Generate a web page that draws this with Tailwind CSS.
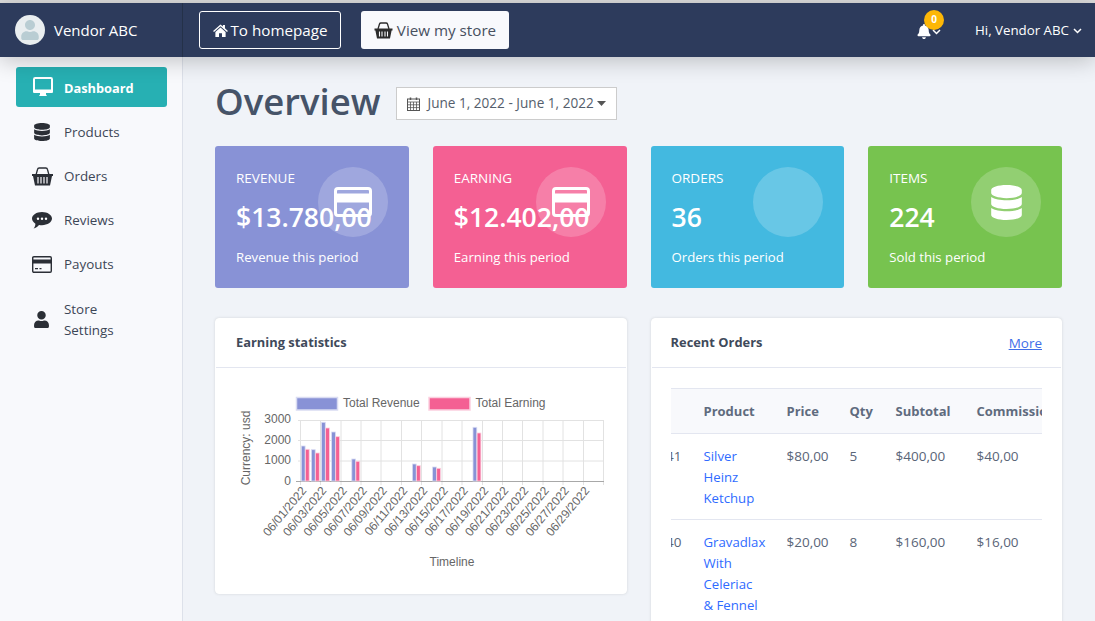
<!DOCTYPE html>
<html lang="en">
<head>
    <meta charset="UTF-8">
    <meta name="viewport" content="width=device-width, initial-scale=1.0">
    <title>Vendor Dashboard</title>
    <script src="https://cdn.jsdelivr.net/npm/@tailwindcss/browser@4"></script>
</head>
<body class="h-screen overflow-hidden bg-[#f0f3f8] font-['Open_Sans',sans-serif] text-[13.5px] text-[#5a6577]">
    <div class="h-[3px] bg-[#dcdcdc]"></div>

    <!-- Top bar -->
    <header class="relative z-10 flex h-[54px] items-center bg-[#2d3b5c] text-white shadow-[0_4px_22px_rgba(0,0,0,0.22)]">
        <div class="flex h-full w-[183px] items-center gap-[9px] border-r border-[#243149] pl-[15px]">
            <div class="flex h-[30px] w-[30px] items-center justify-center overflow-hidden rounded-full bg-[#e9eef0]">
                <svg class="h-[20px] w-[20px] fill-[#b9cdd3]" viewBox="0 0 448 512"><path d="M224 256c70.7 0 128-57.3 128-128S294.7 0 224 0 96 57.3 96 128s57.3 128 128 128zm89.6 32h-16.7c-22.2 10.2-46.9 16-72.9 16s-50.6-5.8-72.9-16h-16.7C60.2 288 0 348.2 0 422.4V464c0 26.5 21.5 48 48 48h352c26.5 0 48-21.5 48-48v-41.6c0-74.2-60.2-134.4-134.4-134.4z"/></svg>
            </div>
            <span class="text-[15px]">Vendor ABC</span>
        </div>
        <a class="ml-[16px] flex h-[38px] w-[142px] items-center justify-center gap-[3px] rounded-[3px] border border-white text-[15.2px]">
            <svg class="h-[13px] w-[15px] fill-white" viewBox="0 0 16 14"><path d="M8 0.5 L10.6 2.8 V1 H12.8 V4.7 L16 7.5 L15 8.6 L8 2.5 L1 8.6 L0 7.5 Z M2.5 8.7 L8 3.9 L13.5 8.7 V14 H9.6 V10 H6.4 V14 H2.5 Z"/></svg>
            <span class="pt-[1px]">To homepage</span>
        </a>
        <a class="ml-[20px] flex h-[38px] w-[148px] items-center justify-center gap-[4px] rounded-[3px] bg-[#f8f9fc] text-[15.2px] text-[#47505f]">
            <svg class="h-[17px] w-[19px]" viewBox="0 0 19 17"><path d="M4 7 L5.5 2 Q5.8 1 7 1 H12 Q13.2 1 13.5 2 L15 7" fill="none" stroke="#2b2b2b" stroke-width="1.3"/><path d="M0.5 6.5 H18.5 V8.5 H17.6 L16 16.5 H3 L1.4 8.5 H0.5 Z" fill="#2b2b2b"/><path d="M5.5 9.5 V14.5 M8 9.5 V14.5 M11 9.5 V14.5 M13.5 9.5 V14.5" stroke="#f8f9fc" stroke-width="1.1"/></svg>
            <span class="pt-[1px]">View my store</span>
        </a>
        <div class="relative ml-auto mr-[34px] flex items-center gap-[1px] pt-[2px]">
            <svg class="h-[15px] w-[14px] fill-white" viewBox="0 0 448 512"><path d="M224 512c35.32 0 63.97-28.65 63.97-64H160.03c0 35.35 28.65 64 63.97 64zm215.39-149.71c-19.32-20.76-55.47-51.99-55.47-154.29 0-77.7-54.48-139.9-127.94-155.16V32c0-17.67-14.32-32-31.98-32s-31.98 14.33-31.98 32v20.84C118.56 68.1 64.08 130.3 64.08 208c0 102.3-36.15 133.53-55.47 154.29-6 6.45-8.66 14.16-8.61 21.71.11 16.4 12.98 32 32.1 32h383.8c19.12 0 32-15.6 32.1-32 .05-7.55-2.61-15.27-8.61-21.71z"/></svg>
            <svg class="mt-[1px] h-[6px] w-[9px]" viewBox="0 0 9 6"><path d="M1 1 L4.5 4.5 L8 1" fill="none" stroke="#fff" stroke-width="1.5"/></svg>
            <span class="absolute left-[7px] top-[-12px] flex h-[20px] w-[20px] items-center justify-center rounded-full bg-[#fdb706] text-[10px] font-bold">0</span>
        </div>
        <div class="mr-[13px] flex items-center gap-[4px] pt-[2px] text-[13.3px]">
            Hi, Vendor ABC
            <svg class="h-[6px] w-[9px]" viewBox="0 0 9 6"><path d="M1 1 L4.5 4.5 L8 1" fill="none" stroke="#fff" stroke-width="1.5"/></svg>
        </div>
    </header>

    <div class="flex h-[564px]">
        <!-- Sidebar -->
        <nav class="w-[183px] shrink-0 border-r border-[#dde1ea] bg-[#f8f9fc] pl-[16px] pr-[15px] pt-[10px] text-[13.4px] text-[#3c4656]">
            <a class="mb-[3px] flex h-[40px] items-center rounded-[3px] bg-[#27b0b3] pl-[17px] text-[12.8px] font-bold text-white">
                <svg class="mr-[11px] h-[20px] w-[20px]" viewBox="0 0 20 20"><rect x="1" y="1" width="18" height="14" rx="1.2" fill="none" stroke="#fff" stroke-width="2"/><path d="M0 12.5 H20 V14.5 Q20 16 18.5 16 H1.5 Q0 16 0 14.5 Z" fill="#fff"/><path d="M7 16 H13 V17.5 L14 19 H6 L7 17.5 Z" fill="#fff"/></svg>
                <span class="pt-[3px]">Dashboard</span>
            </a>
            <a class="flex h-[44px] items-center pl-[18px]">
                <svg class="mr-[14px] h-[18px] w-[16px] fill-[#2b2f36]" viewBox="0 0 448 512"><path d="M448 73.143v45.714C448 159.143 347.667 192 224 192S0 159.143 0 118.857V73.143C0 32.857 100.333 0 224 0s224 32.857 224 73.143zM448 176v102.857C448 319.143 347.667 352 224 352S0 319.143 0 278.857V176c48.125 33.143 136.208 48.572 224 48.572S399.874 209.143 448 176zm0 160v102.857C448 479.143 347.667 512 224 512S0 479.143 0 438.857V336c48.125 33.143 136.208 48.572 224 48.572S399.874 369.143 448 336z"/></svg>
                <span class="pt-[1px]">Products</span>
            </a>
            <a class="flex h-[44px] items-center pl-[16px]">
                <svg class="mr-[11px] h-[19px] w-[21px]" viewBox="0 0 21 19"><path d="M4 8 L5.5 2.5 Q5.8 1 7.2 1 H13.8 Q15.2 1 15.5 2.5 L17 8" fill="none" stroke="#2b2f36" stroke-width="1.3"/><path d="M0 7 H21 V9 H20 L18 18.5 H3 L1 9 H0 Z" fill="#2b2f36"/><path d="M6 10 V16.5 M9 10 V16.5 M12 10 V16.5 M15 10 V16.5" stroke="#f8f9fc" stroke-width="1.2"/></svg>
                <span class="pt-[1px]">Orders</span>
            </a>
            <a class="flex h-[44px] items-center pl-[16px]">
                <svg class="mr-[12px] h-[17px] w-[20px]" viewBox="0 0 20 17"><path d="M10 0 C15.5 0 20 2.9 20 6.6 C20 10.3 15.5 13.2 10 13.2 C8.9 13.2 7.9 13.1 7 12.9 C5.6 14.5 3.6 16 1.6 16.6 C2.8 15 3.4 13.3 3.4 11.7 C1.3 10.4 0 8.6 0 6.6 C0 2.9 4.5 0 10 0 Z" fill="#2b2f36"/><circle cx="6" cy="6.7" r="1.2" fill="#fff"/><circle cx="10" cy="6.7" r="1.2" fill="#fff"/><circle cx="14" cy="6.7" r="1.2" fill="#fff"/></svg>
                <span class="pt-[1px]">Reviews</span>
            </a>
            <a class="flex h-[44px] items-center pl-[16px]">
                <svg class="mr-[12px] h-[17px] w-[20px]" viewBox="0 0 20 17"><rect x="0.7" y="0.7" width="18.6" height="15.6" rx="1.2" fill="none" stroke="#2b2f36" stroke-width="1.4"/><rect x="1" y="3.5" width="18" height="4" fill="#2b2f36"/><path d="M3 12.7 H6 M7.5 12.7 H9.5" stroke="#2b2f36" stroke-width="1.3"/></svg>
                <span class="pt-[1px]">Payouts</span>
            </a>
            <a class="flex h-[67px] items-center pl-[18px] leading-[21px]">
                <svg class="mr-[15px] h-[17px] w-[15px] fill-[#2b2f36]" viewBox="0 0 448 512"><path d="M224 256c70.7 0 128-57.3 128-128S294.7 0 224 0 96 57.3 96 128s57.3 128 128 128zm89.6 32h-16.7c-22.2 10.2-46.9 16-72.9 16s-50.6-5.8-72.9-16h-16.7C60.2 288 0 348.2 0 422.4V464c0 26.5 21.5 48 48 48h352c26.5 0 48-21.5 48-48v-41.6c0-74.2-60.2-134.4-134.4-134.4z"/></svg>
                <span>Store<br>Settings</span>
            </a>
        </nav>

        <!-- Main -->
        <main class="flex-1 pl-[32px] pr-[33px]">
            <div class="flex h-[89px] items-center">
                <h1 class="text-[36.5px] font-semibold leading-none text-[#465368]">Overview</h1>
                <button class="ml-[16px] mt-[4px] flex h-[33px] w-[221px] items-center border border-[#cccccc] bg-white pl-[10px] text-[13.6px] text-[#555e6c]">
                    <svg class="mr-[7px] h-[14px] w-[13px]" viewBox="0 0 13 14"><path d="M3.5 0.5 V3 M9.5 0.5 V3" stroke="#555" stroke-width="1.5"/><rect x="0.5" y="2" width="12" height="11.5" fill="none" stroke="#555"/><path d="M0.5 5 H12.5 M0.5 7.8 H12.5 M0.5 10.6 H12.5 M3.5 5 V13.5 M6.5 5 V13.5 M9.5 5 V13.5" stroke="#555" stroke-width="0.8"/></svg>
                    June 1, 2022 - June 1, 2022
                    <svg class="ml-[3px] h-[5px] w-[9px] fill-[#555]" viewBox="0 0 9 5"><path d="M0 0 H9 L4.5 5 Z"/></svg>
                </button>
            </div>

            <!-- Stat cards -->
            <div class="grid grid-cols-4 gap-[24px] text-white">
                <div class="relative h-[142px] overflow-hidden rounded-[3px] bg-[#8892d6] pl-[21px]">
                    <div class="absolute right-[21px] top-[21px] flex h-[70px] w-[70px] items-center justify-center rounded-full bg-white/20">
                        <svg class="h-[30px] w-[38px]" viewBox="0 0 38 30"><rect x="1.5" y="1.5" width="35" height="27" rx="2.5" fill="none" stroke="#fff" stroke-width="3"/><rect x="1" y="6.5" width="36" height="9" fill="#fff"/></svg>
                    </div>
                    <div class="relative">
                        <p class="pt-[22px] leading-[20px]">REVENUE</p>
                        <p class="mt-[10px] text-[26.5px] font-semibold leading-[38px]">$13.780,00</p>
                        <p class="mt-[11px] text-[13.2px] leading-[20px]">Revenue this period</p>
                    </div>
                </div>
                <div class="relative h-[142px] overflow-hidden rounded-[3px] bg-[#f46093] pl-[21px]">
                    <div class="absolute right-[21px] top-[21px] flex h-[70px] w-[70px] items-center justify-center rounded-full bg-white/20">
                        <svg class="h-[30px] w-[38px]" viewBox="0 0 38 30"><rect x="1.5" y="1.5" width="35" height="27" rx="2.5" fill="none" stroke="#fff" stroke-width="3"/><rect x="1" y="6.5" width="36" height="9" fill="#fff"/></svg>
                    </div>
                    <div class="relative">
                        <p class="pt-[22px] leading-[20px]">EARNING</p>
                        <p class="mt-[10px] text-[26.5px] font-semibold leading-[38px]">$12.402,00</p>
                        <p class="mt-[11px] text-[13.2px] leading-[20px]">Earning this period</p>
                    </div>
                </div>
                <div class="relative h-[142px] overflow-hidden rounded-[3px] bg-[#43b9e0] pl-[21px]">
                    <div class="absolute right-[21px] top-[21px] h-[70px] w-[70px] rounded-full bg-white/20"></div>
                    <div class="relative">
                        <p class="pt-[22px] leading-[20px]">ORDERS</p>
                        <p class="mt-[10px] text-[26.5px] font-semibold leading-[38px]">36</p>
                        <p class="mt-[11px] text-[13.2px] leading-[20px]">Orders this period</p>
                    </div>
                </div>
                <div class="relative h-[142px] overflow-hidden rounded-[3px] bg-[#77c34f] pl-[21px]">
                    <div class="absolute right-[21px] top-[21px] flex h-[70px] w-[70px] items-center justify-center rounded-full bg-white/20">
                        <svg class="h-[35px] w-[31px] fill-white" viewBox="0 0 448 512"><path d="M448 73.143v45.714C448 159.143 347.667 192 224 192S0 159.143 0 118.857V73.143C0 32.857 100.333 0 224 0s224 32.857 224 73.143zM448 176v102.857C448 319.143 347.667 352 224 352S0 319.143 0 278.857V176c48.125 33.143 136.208 48.572 224 48.572S399.874 209.143 448 176zm0 160v102.857C448 479.143 347.667 512 224 512S0 479.143 0 438.857V336c48.125 33.143 136.208 48.572 224 48.572S399.874 369.143 448 336z"/></svg>
                    </div>
                    <div class="relative">
                        <p class="pt-[22px] leading-[20px]">ITEMS</p>
                        <p class="mt-[10px] text-[26.5px] font-semibold leading-[38px]">224</p>
                        <p class="mt-[11px] text-[13.2px] leading-[20px]">Sold this period</p>
                    </div>
                </div>
            </div>

            <div class="mt-[30px] grid grid-cols-2 items-start gap-[24px]">
                <!-- Earning statistics -->
                <section class="h-[276px] rounded-[4px] border border-white bg-white shadow-[0_0_3px_rgba(0,0,0,0.12)]">
                    <div class="flex h-[49px] items-center border-b border-[#e3e6f0] pl-[20px] text-[12.9px] font-bold text-[#3f4a5a]">Earning statistics</div>
                    <svg class="block h-[225px] w-[410px]" viewBox="216 368 410 225" font-family="'Liberation Sans', sans-serif" font-size="12" fill="#666">
                        <g stroke="#e2e2e2" stroke-width="1">
                            <path d="M298 420.5 H604 M298 440.5 H604 M298 461 H604"/>
                            <path d="M300.5 420 V485 M320.5 420 V485 M341 420 V485 M361 420 V485 M381 420 V485 M401.5 420 V485 M421.5 420 V485 M442 420 V485 M462 420 V485 M482.5 420 V485 M502.5 420 V485 M522.5 420 V485 M543 420 V485 M563 420 V485 M583.5 420 V485 M603.5 420 V485"/>
                        </g>
                        <path d="M296 481.5 H604" stroke="#a8a8a8"/>
                        <g fill="#8892d6" stroke="#d9dcf2" stroke-width="0.8">
                            <rect x="301.3" y="446" width="3.8" height="35"/>
                            <rect x="311.4" y="449.7" width="3.8" height="31.3"/>
                            <rect x="321.5" y="422.3" width="3.8" height="58.7"/>
                            <rect x="331.6" y="432" width="3.8" height="49"/>
                            <rect x="351.8" y="459" width="3.8" height="22"/>
                            <rect x="412.4" y="464" width="3.8" height="17"/>
                            <rect x="432.6" y="467" width="3.8" height="14"/>
                            <rect x="473" y="427.3" width="3.8" height="53.7"/>
                        </g>
                        <g fill="#f46093" stroke="#fbd0df" stroke-width="0.8">
                            <rect x="305.4" y="449.3" width="3.8" height="31.7"/>
                            <rect x="315.5" y="453" width="3.8" height="28"/>
                            <rect x="325.6" y="428" width="3.8" height="53"/>
                            <rect x="335.7" y="436.7" width="3.8" height="44.3"/>
                            <rect x="355.9" y="461.3" width="3.8" height="19.7"/>
                            <rect x="416.5" y="465.7" width="3.8" height="15.3"/>
                            <rect x="436.7" y="468.3" width="3.8" height="12.7"/>
                            <rect x="477.1" y="433" width="3.8" height="48"/>
                        </g>
                        <rect x="296.5" y="397.5" width="41" height="12.5" fill="#8892d6" stroke="#d9dcf2" stroke-width="1.5"/>
                        <text x="343" y="407">Total Revenue</text>
                        <rect x="429" y="397.5" width="41" height="12.5" fill="#f46093" stroke="#fbd0df" stroke-width="1.5"/>
                        <text x="475.5" y="407">Total Earning</text>
                        <g text-anchor="end">
                            <text x="291" y="423">3000</text>
                            <text x="291" y="444">2000</text>
                            <text x="291" y="464">1000</text>
                            <text x="291" y="485">0</text>
                        </g>
                        <text transform="translate(250 448) rotate(-90)" text-anchor="middle">Currency: usd</text>
                        <text x="452" y="566" text-anchor="middle">Timeline</text>
                        <g text-anchor="end">
                            <text transform="translate(307 491) rotate(-50)">06/01/2022</text>
                            <text transform="translate(327 491) rotate(-50)">06/03/2022</text>
                            <text transform="translate(347.5 491) rotate(-50)">06/05/2022</text>
                            <text transform="translate(367.5 491) rotate(-50)">06/07/2022</text>
                            <text transform="translate(387.5 491) rotate(-50)">06/09/2022</text>
                            <text transform="translate(408 491) rotate(-50)">06/11/2022</text>
                            <text transform="translate(428 491) rotate(-50)">06/13/2022</text>
                            <text transform="translate(448.5 491) rotate(-50)">06/15/2022</text>
                            <text transform="translate(468.5 491) rotate(-50)">06/17/2022</text>
                            <text transform="translate(489 491) rotate(-50)">06/19/2022</text>
                            <text transform="translate(509 491) rotate(-50)">06/21/2022</text>
                            <text transform="translate(529 491) rotate(-50)">06/23/2022</text>
                            <text transform="translate(549.5 491) rotate(-50)">06/25/2022</text>
                            <text transform="translate(569.5 491) rotate(-50)">06/27/2022</text>
                            <text transform="translate(590 491) rotate(-50)">06/29/2022</text>
                        </g>
                    </svg>
                </section>

                <!-- Recent orders -->
                <section class="h-[400px] rounded-[4px] border border-white bg-white shadow-[0_0_3px_rgba(0,0,0,0.12)]">
                    <div class="flex h-[49px] items-center justify-between border-b border-[#e3e6f0] pl-[19px] pr-[19px]">
                        <span class="text-[12.9px] font-bold text-[#3f4a5a]">Recent Orders</span>
                        <a class="text-[13.5px] text-[#3f6ee8] underline">More</a>
                    </div>
                    <div class="ml-[19px] mr-[19px] mt-[20px] overflow-hidden">
                        <table class="ml-[-49px] w-[600px] table-fixed border-collapse text-left">
                            <thead class="bg-[#f8f9fc] text-[13px] text-[#5f6b7e]">
                                <tr class="h-[45px] border-y border-[#e3e6f0]">
                                    <th class="w-[70px] px-[12px] pt-[2px] font-bold">ID</th>
                                    <th class="w-[83px] px-[12px] pt-[2px] font-bold">Product</th>
                                    <th class="w-[63px] px-[12px] pt-[2px] font-bold">Price</th>
                                    <th class="w-[46px] px-[12px] pt-[2px] font-bold">Qty</th>
                                    <th class="w-[81px] px-[12px] pt-[2px] font-bold">Subtotal</th>
                                    <th class="px-[12px] pt-[2px] font-bold">Commission</th>
                                </tr>
                            </thead>
                            <tbody class="align-top leading-[21px]">
                                <tr class="border-b border-[#e3e6f0]">
                                    <td class="pl-[12px] pr-[10px] pt-[12px] pb-[10px] text-right">1041</td>
                                    <td class="px-[12px] pt-[12px] pb-[10px] text-[13.2px] text-[#2f6bff]">Silver Heinz Ketchup</td>
                                    <td class="px-[12px] pt-[12px] pb-[10px]">$80,00</td>
                                    <td class="px-[12px] pt-[12px] pb-[10px]">5</td>
                                    <td class="px-[12px] pt-[12px] pb-[10px]">$400,00</td>
                                    <td class="px-[12px] pt-[12px] pb-[10px]">$40,00</td>
                                </tr>
                                <tr>
                                    <td class="pl-[12px] pr-[10px] pt-[12px] pb-[10px] text-right">1040</td>
                                    <td class="px-[12px] pt-[12px] pb-[10px] text-[13.2px] text-[#2f6bff]">Gravadlax With Celeriac &amp; Fennel</td>
                                    <td class="px-[12px] pt-[12px] pb-[10px]">$20,00</td>
                                    <td class="px-[12px] pt-[12px] pb-[10px]">8</td>
                                    <td class="px-[12px] pt-[12px] pb-[10px]">$160,00</td>
                                    <td class="px-[12px] pt-[12px] pb-[10px]">$16,00</td>
                                </tr>
                            </tbody>
                        </table>
                    </div>
                </section>
            </div>
        </main>
    </div>
</body>
</html>
